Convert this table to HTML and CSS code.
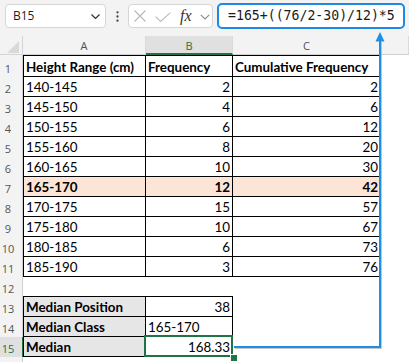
FILE: index.html
```html
<!DOCTYPE html>
<html>
<head>
<meta charset="utf-8">
<title>Median</title>
<link rel="stylesheet" href="styles.css">
</head>
<body>
<div class="app">
  <div class="toolbar">
    <div class="namebox">
      <span>B15</span>
      <svg class="chev" width="9" height="5" viewBox="0 0 9 5"><path d="M0.5 0.5 L4.5 4.5 L8.5 0.5" fill="none" stroke="#333" stroke-width="1.2"/></svg>
    </div>
    <div class="more">
      <svg width="3" height="11" viewBox="0 0 3 11"><circle cx="1.5" cy="1.3" r="1.15" fill="#444"/><circle cx="1.5" cy="5.5" r="1.15" fill="#444"/><circle cx="1.5" cy="9.7" r="1.15" fill="#444"/></svg>
    </div>
    <div class="fxbox">
      <svg class="ico ico-x" width="12" height="12" viewBox="0 0 12 12"><path d="M0.5 0.5 L11.5 11.5 M11.5 0.5 L0.5 11.5" fill="none" stroke="#b8b8b8" stroke-width="1.1"/></svg>
      <svg class="ico ico-ok" width="16" height="10" viewBox="0 0 16 10"><path d="M0.6 4.6 L5.6 9.4 L15.4 0.6" fill="none" stroke="#b8b8b8" stroke-width="1.1"/></svg>
      <span class="ico fx">fx</span>
      <svg class="ico chev2" width="10" height="6" viewBox="0 0 10 6"><path d="M0.8 0.8 L5 5 L9.2 0.8" fill="none" stroke="#8c8c8c" stroke-width="1.2"/></svg>
    </div>
    <div class="formula">=165+((76/2-30)/12)*5</div>
  </div>

  <div class="sheet">
    <div class="corner"><svg width="23" height="19" viewBox="0 0 23 19"><polygon points="19,5 19,17 7,17" fill="#d9d9d9"/></svg></div>
    <div class="ch">A</div><div class="ch chs">B</div><div class="ch">C</div><div class="ch"></div>

    <div class="rh">1</div><div class="c t l top b">Height Range (cm)</div><div class="c t top b">Frequency</div><div class="c t top b">Cumulative Frequency</div><div class="c"></div>
    <div class="rh">2</div><div class="c t l">140-145</div><div class="c t n">2</div><div class="c t n">2</div><div class="c"></div>
    <div class="rh">3</div><div class="c t l">145-150</div><div class="c t n">4</div><div class="c t n">6</div><div class="c"></div>
    <div class="rh">4</div><div class="c t l">150-155</div><div class="c t n">6</div><div class="c t n">12</div><div class="c"></div>
    <div class="rh">5</div><div class="c t l">155-160</div><div class="c t n">8</div><div class="c t n">20</div><div class="c"></div>
    <div class="rh">6</div><div class="c t l">160-165</div><div class="c t n">10</div><div class="c t n">30</div><div class="c"></div>
    <div class="rh">7</div><div class="c t l hl b">165-170</div><div class="c t n hl b">12</div><div class="c t n hl b">42</div><div class="c"></div>
    <div class="rh">8</div><div class="c t l">170-175</div><div class="c t n">15</div><div class="c t n">57</div><div class="c"></div>
    <div class="rh">9</div><div class="c t l">175-180</div><div class="c t n">10</div><div class="c t n">67</div><div class="c"></div>
    <div class="rh">10</div><div class="c t l">180-185</div><div class="c t n">6</div><div class="c t n">73</div><div class="c"></div>
    <div class="rh">11</div><div class="c t l">185-190</div><div class="c t n">3</div><div class="c t n">76</div><div class="c"></div>
    <div class="rh">12</div><div class="c under"></div><div class="c under"></div><div class="c"></div><div class="c"></div>
    <div class="rh">13</div><div class="c t l g b">Median Position</div><div class="c t n">38</div><div class="c"></div><div class="c"></div>
    <div class="rh">14</div><div class="c t l g b">Median Class</div><div class="c t">165-170</div><div class="c"></div><div class="c"></div>
    <div class="rh rhs">15</div><div class="c t l g b">Median</div><div class="c t n sel">168.33</div><div class="c"></div><div class="c"></div>
    <div class="rh"></div><div class="c"></div><div class="c"></div><div class="c"></div><div class="c"></div>
  </div>

  <svg class="arrow" width="409" height="362" viewBox="0 0 409 362">
    <path d="M235 348.5 H381.5 V42" fill="none" stroke="#a0a0a0" stroke-opacity="0.6" stroke-width="1"/>
    <path d="M234 347 H380 V40" fill="none" stroke="#1e8fe6" stroke-width="2"/>
    <polygon points="380,32 375.5,41.5 384.5,41.5" fill="#1e8fe6"/>
  </svg>
</div>
</body>
</html>
```
FILE: styles.css
```css
* { box-sizing: border-box; }
html, body { margin: 0; padding: 0; }
body {
  width: 409px;
  height: 362px;
  overflow: hidden;
  background: #fff;
  font-family: Lato, "Liberation Sans", sans-serif;
}
.app {
  position: relative;
  width: 409px;
  height: 362px;
  overflow: hidden;
}

/* ---------- toolbar ---------- */
.toolbar {
  height: 36px;
  background: #f3f3f3;
  display: flex;
  align-items: flex-start;
  padding: 4px 0 0 5px;
}
.namebox {
  flex: none;
  width: 101px;
  height: 24px;
  background: #fff;
  border: 1px solid #d6d6d6;
  border-radius: 4px;
  display: flex;
  align-items: center;
  justify-content: space-between;
  padding: 0 5px 0 7px;
  font-family: "Open Sans", "Noto Sans", sans-serif;
  font-size: 12px;
  color: #1f1f1f;
}
.namebox span { line-height: 22px; }
.more {
  flex: none;
  width: 22px;
  height: 24px;
  display: flex;
  align-items: center;
  justify-content: center;
}
.fxbox {
  flex: none;
  width: 85px;
  height: 24px;
  background: #fff;
  border: 1px solid #d6d6d6;
  border-radius: 4px;
  display: flex;
  align-items: center;
  padding-left: 5px;
}
.ico { flex: none; display: block; }
.ico-ok { margin-left: 9px; margin-top: 1px; }
.fx {
  width: 15px;
  margin-left: 9px;
  font-family: "Liberation Serif", "DejaVu Serif", serif;
  font-style: italic;
  font-size: 16px;
  color: #333;
  line-height: 20px;
}
.chev2 { margin-left: 5px; margin-top: 1px; }
.formula {
  flex: none;
  margin-left: 4px;
  margin-top: -1px;
  width: 188px;
  height: 26px;
  background: #fff;
  border: 2px solid #1e88e5;
  border-radius: 5px;
  padding-left: 9px;
  font-family: "DejaVu Sans Mono", "Liberation Mono", monospace;
  font-size: 13.2px;
  line-height: 22px;
  color: #1a1a1a;
  white-space: nowrap;
}

/* ---------- sheet ---------- */
.sheet {
  display: grid;
  grid-template-columns: 23px 123px 87px 148px 28px;
  grid-template-rows: 19px 22px repeat(14, 20px) 20px;
}
.corner {
  background: #f3f3f3;
  border-right: 1px solid #d4d4d4;
  border-bottom: 1px solid #d4d4d4;
}
.corner svg { display: block; }
.ch {
  background: #f3f3f3;
  border-right: 1px solid #dadada;
  border-bottom: 1px solid #d0d0d0;
  font-family: "Open Sans", "Noto Sans", sans-serif;
  font-size: 11px;
  color: #505050;
  display: flex;
  align-items: center;
  justify-content: center;
  line-height: 15px;
  padding-top: 1px;
}
.chs {
  background: #e0e0e0;
  color: #217346;
  border-bottom: 2px solid #217346;
}
.rh {
  background: #f3f3f3;
  border-right: 1px solid #d0d0d0;
  font-family: "Open Sans", "Noto Sans", sans-serif;
  font-size: 11px;
  color: #555;
  display: flex;
  align-items: flex-end;
  justify-content: center;
  padding: 0 6px 1px 0;
  line-height: 15px;
}
.rhs {
  background: #e0e0e0;
  color: #217346;
  border-right: 1px solid #217346;
}
.c {
  font-size: 13.4px;
  line-height: 16px;
  color: #000;
  display: flex;
  align-items: flex-end;
  padding: 0 2px 1px 2px;
  white-space: nowrap;
  overflow: hidden;
}
.t {
  border-right: 1px solid #000;
  border-bottom: 1px solid #000;
}
.l { border-left: 1px solid #000; }
.top { border-top: 1px solid #000; }
.under { border-bottom: 1px solid #000; }
.n { justify-content: flex-end; }
.b { font-weight: 700; }
.hl { background: #fce4d6; }
.g { background: #e7e6e6; }
.sel {
  position: relative;
  overflow: visible;
}
.sel::after {
  content: "";
  position: absolute;
  top: -2px;
  left: -2px;
  right: -1px;
  bottom: -1px;
  border: 2px solid #217346;
}
.sel::before {
  content: "";
  position: absolute;
  left: 84px;
  top: 17px;
  width: 6px;
  height: 6px;
  background: #217346;
  border: 1px solid #fff;
  z-index: 2;
}

/* ---------- arrow overlay ---------- */
.arrow {
  position: absolute;
  left: 0;
  top: 0;
  pointer-events: none;
}
```
